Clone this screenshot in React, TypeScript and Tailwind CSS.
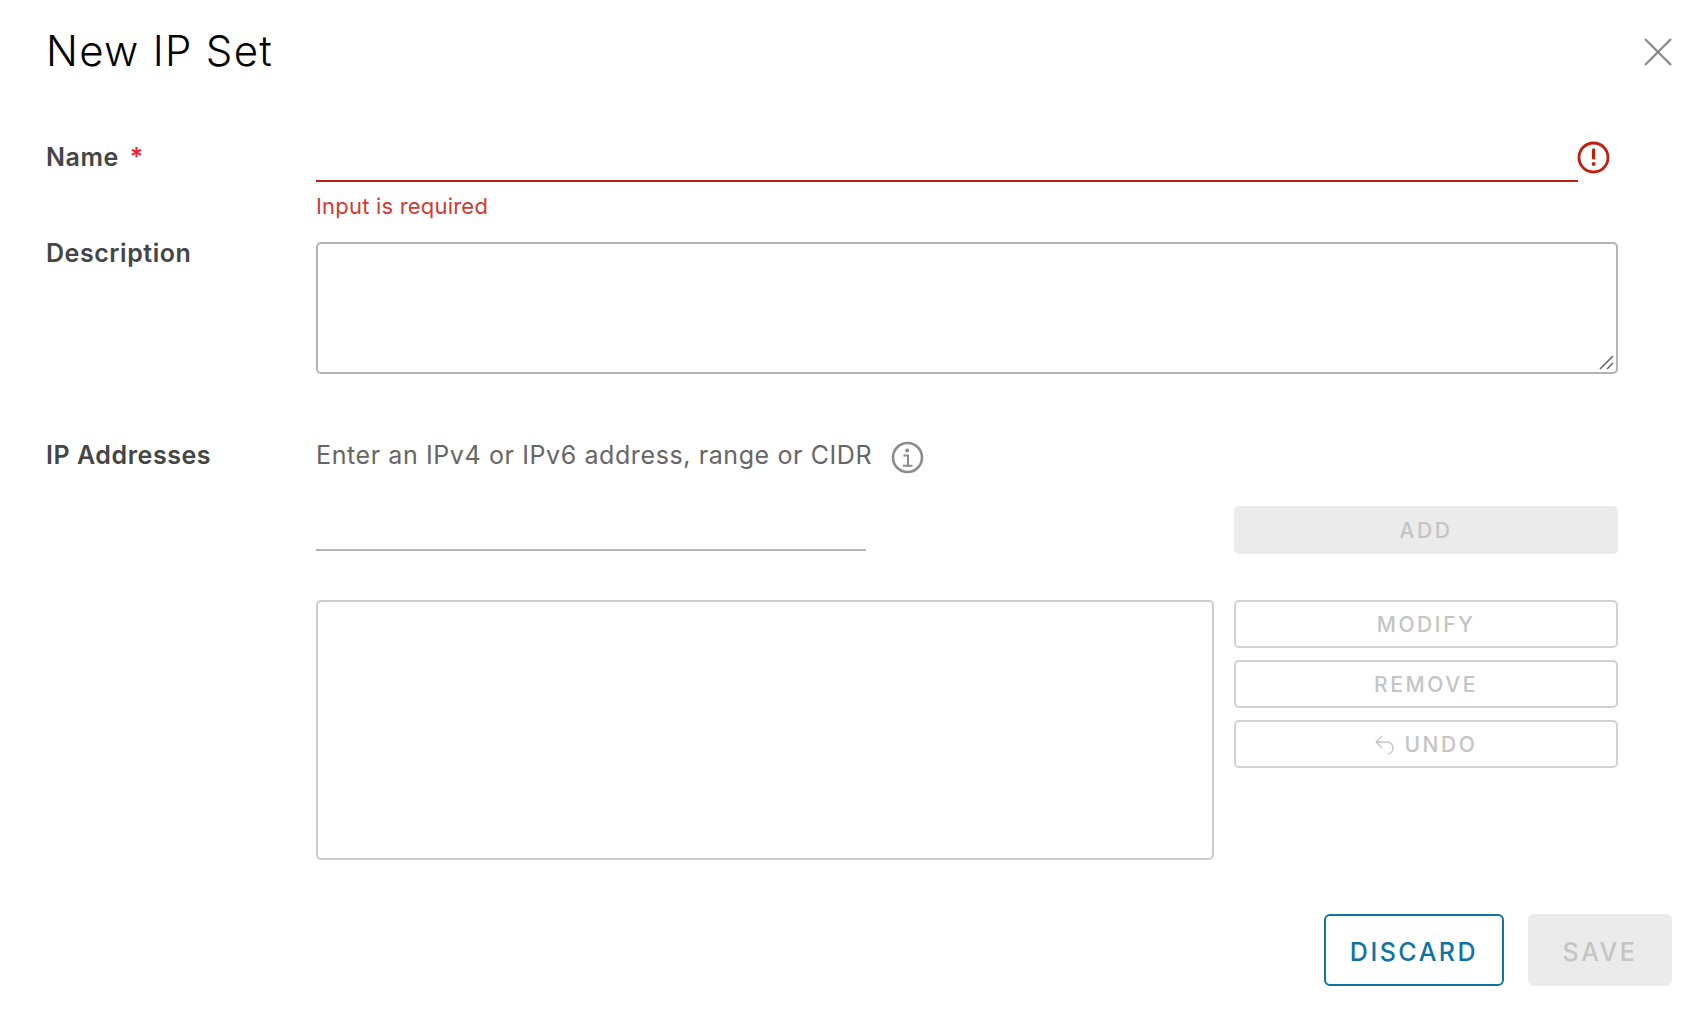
import React from 'react';

const fieldLabel = 'w-[270px] shrink-0 text-[25px] leading-[32px] font-semibold tracking-[0.55px] text-[#454545]';
const sideBtn =
  'h-12 w-full flex items-center justify-center gap-2 pt-[2px] rounded-[5px] text-[21px] font-medium tracking-[2.6px] text-[#c4c4c4]';

export default function App() {
  return (
    <div className="w-[1700px] h-[1012px] bg-white overflow-hidden pl-[46px] flex flex-col font-['Inter',sans-serif]">
      <div className="flex items-center justify-between h-[56px] mt-[23px] pr-[27px]">
        <h1 className="text-[42px] leading-[56px] font-light tracking-[1.3px] text-black">New IP Set</h1>
        <button type="button">
          <svg className="w-[30px] h-[30px] mt-[1px]" viewBox="0 0 30 30" fill="none">
            <path d="M2 2 L28 28 M28 2 L2 28" stroke="#8c8c8c" strokeWidth="2.4" />
          </svg>
        </button>
      </div>

      <div className="flex mt-[62px] h-[41px]">
        <label className={fieldLabel}>
          Name <span className="text-[#f0212c] ml-1">*</span>
        </label>
        <div className="flex items-start">
          <div className="w-[1262px] h-[41px] border-b-2 border-[#c21d0e]" />
          <svg className="w-[33px] h-[33px] ml-[-1px]" viewBox="0 0 33 33" fill="none">
            <circle cx="16.5" cy="16.5" r="14.5" stroke="#c21d0e" strokeWidth="2.8" />
            <rect x="15" y="7.5" width="3.2" height="11" rx="1.2" fill="#c21d0e" />
            <circle cx="16.6" cy="23" r="2" fill="#c21d0e" />
          </svg>
        </div>
      </div>

      <div className="ml-[270px] mt-[11px] h-[26px] text-[22px] leading-[26px] tracking-[0.2px] text-[#cf3b32]">Input is required</div>

      <div className="flex mt-[23px]">
        <label className={`${fieldLabel} mt-[-5px]`}>Description</label>
        <div className="relative w-[1302px] h-[132px] border-2 border-[#b3b3b3] rounded-[5px]">
          <svg className="absolute right-0 bottom-0 w-[18px] h-[18px]" viewBox="0 0 18 18" fill="none">
            <path d="M2 15 L15 2 M9 15 L15 9" stroke="#666" strokeWidth="1.6" />
          </svg>
        </div>
      </div>

      <div className="flex mt-[65px]">
        <label className={fieldLabel}>IP Addresses</label>
        <div className="w-[1302px] flex flex-col">
          <div className="flex items-center h-[34px] text-[25px] tracking-[0.6px] text-[#666666]">
            Enter an IPv4 or IPv6 address, range or CIDR
            <svg className="w-[33px] h-[33px] ml-[19px] mt-[3px]" viewBox="0 0 33 33" fill="none">
              <circle cx="16.5" cy="16.5" r="14.5" stroke="#8c8c8c" strokeWidth="2.6" />
              <circle cx="16.2" cy="9.5" r="2" fill="#8c8c8c" />
              <path d="M12.5 14.5 H17 V24.5 M12 24.8 H21.5" stroke="#8c8c8c" strokeWidth="2" />
            </svg>
          </div>

          <div className="flex justify-between mt-[33px]">
            <div className="w-[550px] h-[45px] border-b-2 border-[#b3b3b3]" />
            <button type="button" className={`${sideBtn} !w-[384px] bg-[#ebebeb]`}>ADD</button>
          </div>

          <div className="flex justify-between mt-[46px]">
            <div className="w-[898px] h-[260px] border-2 border-[#cccccc] rounded-[5px]" />
            <div className="w-[384px] flex flex-col gap-3">
              <button type="button" className={`${sideBtn} border-2 border-[#d1d1d1]`}>MODIFY</button>
              <button type="button" className={`${sideBtn} border-2 border-[#d1d1d1]`}>REMOVE</button>
              <button type="button" className={`${sideBtn} border-2 border-[#d1d1d1]`}>
                <svg className="w-[22px] h-[22px]" viewBox="0 0 22 22" fill="none">
                  <path d="M2 8 L8 2 M2 8 L8 14 M2 8 H13 A6 6 0 0 1 19 14 A6 6 0 0 1 14 20" stroke="#c4c4c4" strokeWidth="1.4" />
                </svg>
                UNDO
              </button>
            </div>
          </div>
        </div>
      </div>

      <div className="flex justify-end gap-6 mt-[54px] pr-[28px]">
        <button
          type="button"
          className="w-[180px] h-[72px] pt-[5px] rounded-[6px] border-2 border-[#0f74a3] text-[#0f74a3] text-[25px] font-medium tracking-[2.5px]"
        >
          DISCARD
        </button>
        <button
          type="button"
          className="w-[144px] h-[72px] pt-[5px] rounded-[6px] bg-[#ebebeb] text-[#c4c4c4] text-[25px] font-medium tracking-[2.5px]"
        >
          SAVE
        </button>
      </div>
    </div>
  );
}
